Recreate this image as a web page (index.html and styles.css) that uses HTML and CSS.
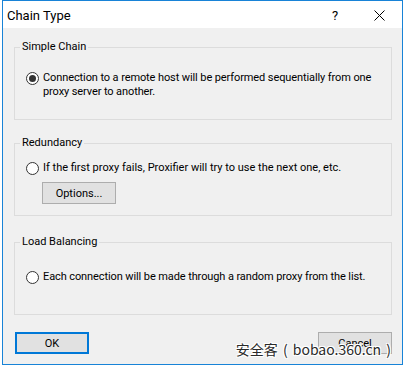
FILE: index.html
```html
<!DOCTYPE html>
<html lang="en">
<head>
    <meta charset="UTF-8">
    <title>Chain Type</title>
    <link rel="stylesheet" href="styles.css">
</head>
<body>
    <div class="window">
        <div class="titlebar">
            <span class="title">Chain Type</span>
            <span class="help">?</span>
            <span class="close">
                <svg width="11" height="11" viewBox="0 0 11 11" fill="none" stroke="#000" stroke-width="1">
                    <path d="M0.5 0.5L10.5 10.5M10.5 0.5L0.5 10.5"/>
                </svg>
            </span>
        </div>

        <div class="content">
            <fieldset class="group group-simple">
                <legend>Simple Chain</legend>
                <label class="radio">
                    <span class="radio-mark checked"></span>
                    <span class="radio-text">Connection to a remote host will be performed sequentially from one<br>proxy server to another.</span>
                </label>
            </fieldset>

            <fieldset class="group group-redundancy">
                <legend>Redundancy</legend>
                <label class="radio">
                    <span class="radio-mark"></span>
                    <span class="radio-text">If the first proxy fails, Proxifier will try to use the next one, etc.</span>
                </label>
                <button class="btn btn-options">Options...</button>
            </fieldset>

            <fieldset class="group group-balance">
                <legend>Load Balancing</legend>
                <label class="radio">
                    <span class="radio-mark"></span>
                    <span class="radio-text">Each connection will be made through a random proxy from the list.</span>
                </label>
            </fieldset>

            <div class="buttons">
                <button class="btn btn-default">OK</button>
                <button class="btn">Cancel</button>
            </div>

            <div class="watermark">安全客 ( bobao.360.cn )</div>
        </div>
    </div>
</body>
</html>
```

FILE: styles.css
```css
* {
    margin: 0;
    padding: 0;
    box-sizing: border-box;
}

body {
    background: #fff;
    font-family: "Segoe UI", Roboto, "Liberation Sans", sans-serif;
    font-size: 11px;
    color: #000;
}

.window {
    width: 401px;
    height: 365px;
    margin: 0 0 0 2px;
    border: 1px solid #1883d7;
    background: #f0f0f0;
    display: flex;
    flex-direction: column;
}

.titlebar {
    height: 27px;
    background: #fff;
    display: flex;
    align-items: center;
    padding-left: 4px;
}

.title {
    font-size: 13px;
    flex: 1;
    padding-top: 1px;
}

.help {
    font-size: 13px;
    width: 12px;
    margin-right: 30px;
    padding-top: 1px;
}

.close {
    display: flex;
    margin-right: 17px;
    margin-top: 1px;
}

.content {
    flex: 1;
    padding: 11px 10px 0 11px;
    display: flex;
    flex-direction: column;
    position: relative;
}

.group {
    height: 81px;
    border: 1px solid #dcdcdc;
    padding: 0 0 0 11px;
}

.group legend {
    margin-left: -6px;
    padding: 0 2px;
    line-height: 16px;
}

.group-simple {
    padding-top: 16px;
}

.group-simple .radio-text,
.group-balance .radio-text {
    letter-spacing: -0.1px;
}

.group-redundancy {
    margin-top: 15px;
    padding-top: 10px;
}

.group-balance {
    margin-top: 18px;
    padding-top: 20px;
}

.radio {
    display: flex;
    align-items: flex-start;
    gap: 4px;
    line-height: 14px;
}

.radio-text {
    white-space: nowrap;
}

.radio-mark {
    flex: none;
    width: 13px;
    height: 13px;
    border: 1px solid #333;
    border-radius: 50%;
    background: #fff;
    display: flex;
    align-items: center;
    justify-content: center;
    margin-top: 1px;
}

.radio-mark.checked::after {
    content: '';
    width: 7px;
    height: 7px;
    border-radius: 50%;
    background: #333;
}

.btn {
    font-family: inherit;
    font-size: 11px;
    color: #000;
    width: 74px;
    height: 22px;
    background: #e1e1e1;
    border: 1px solid #adadad;
}

.btn-options {
    margin: 7px 0 0 16px;
}

.btn-default {
    border: 2px solid #0078d7;
}

.buttons {
    display: flex;
    justify-content: space-between;
    margin: 17px 0 0 1px;
}

.watermark {
    position: absolute;
    right: 11px;
    bottom: 6px;
    font-family: "Noto Sans CJK SC", "Liberation Sans", sans-serif;
    font-size: 14px;
    line-height: 18px;
    word-spacing: 2px;
    color: #2a2a2a;
    text-shadow: 1px 1px 0 #fff, -1px -1px 0 #fff, 1px -1px 0 #fff, -1px 1px 0 #fff;
}
```
